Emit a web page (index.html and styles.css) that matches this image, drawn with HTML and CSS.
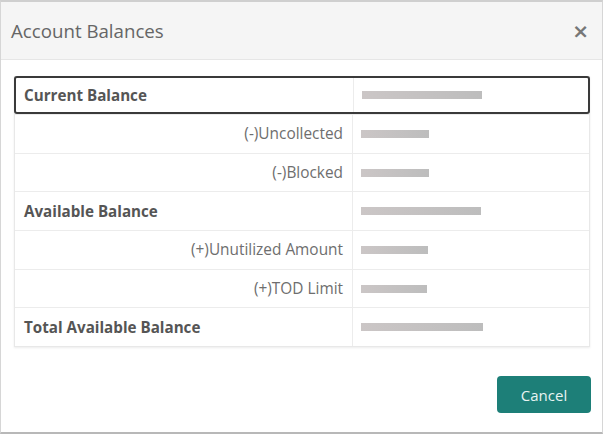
FILE: index.html
```html
<!DOCTYPE html>
<html>
  <head>
    <title>Account Balances</title>
    <link rel="stylesheet" href="styles.css">
  </head>
  <body>
    <div class="modal">
      <div class="modal-header">
        <h2>Account Balances</h2>
        <button class="close">&times;</button>
      </div>
      <div class="modal-body">
        <div class="balances">
          <div class="row current">
            <div class="label strong">Current Balance</div>
            <div class="value"><span class="mask" style="width: 120px"></span></div>
          </div>
          <div class="row">
            <div class="label">(-)Uncollected</div>
            <div class="value"><span class="mask" style="width: 68px"></span></div>
          </div>
          <div class="row">
            <div class="label">(-)Blocked</div>
            <div class="value"><span class="mask" style="width: 68px"></span></div>
          </div>
          <div class="row">
            <div class="label strong">Available Balance</div>
            <div class="value"><span class="mask" style="width: 120px"></span></div>
          </div>
          <div class="row">
            <div class="label">(+)Unutilized Amount</div>
            <div class="value"><span class="mask" style="width: 67px"></span></div>
          </div>
          <div class="row">
            <div class="label">(+)TOD Limit</div>
            <div class="value"><span class="mask" style="width: 66px"></span></div>
          </div>
          <div class="row">
            <div class="label strong">Total Available Balance</div>
            <div class="value"><span class="mask" style="width: 122px"></span></div>
          </div>
        </div>
      </div>
      <div class="modal-footer">
        <button class="btn">Cancel</button>
      </div>
    </div>
  </body>
</html>
```

FILE: styles.css
```css
body {
  margin: 0;
  background-color: white;
  font-family: "Open Sans", sans-serif;
  color: #555;
}

.modal {
  height: 434px;
  box-sizing: border-box;
  border: 1px solid #d6d6d6;
  border-top: 2px solid #cfcfcf;
  border-bottom: 2px solid #b8b8b8;
  display: flex;
  flex-direction: column;
}

.modal-header {
  height: 57px;
  background-color: #f5f5f5;
  border-bottom: 1px solid #e6e6e6;
  display: flex;
  align-items: center;
  justify-content: space-between;
  padding: 0 13px 0 10px;
}

.modal-header h2 {
  margin: 0;
  font-size: 18.7px;
  font-weight: normal;
  color: #666;
}

.close {
  border: none;
  background: none;
  font-family: "DejaVu Sans", sans-serif;
  font-size: 20px;
  font-weight: bold;
  color: #777;
  padding: 0;
  line-height: 1;
}

.modal-body {
  padding: 16px 12px 0 13px;
}

.balances {
  border: 1px solid #e8e8e8;
  box-shadow: 0 1px 2px rgba(0, 0, 0, 0.08);
}

.row {
  display: flex;
  height: 37.7px;
  border-top: 1px solid #ececec;
}

.row:first-child {
  border-top: none;
}

.row.current {
  height: 34px;
  border: 2px solid #3a3a3a;
  border-radius: 3px;
  margin: -1px -1px 0 -1px;
}

.row.current .label {
  padding-left: 8px;
}

.label {
  width: 338px;
  box-sizing: border-box;
  border-right: 1px solid #ececec;
  display: flex;
  align-items: center;
  justify-content: flex-end;
  padding: 0 9px;
  font-size: 15.4px;
  color: #6e6e6e;
}

.label.strong {
  justify-content: flex-start;
  font-weight: bold;
  font-size: 15.2px;
  color: #555;
}

.value {
  flex: 1;
  display: flex;
  align-items: center;
  padding-left: 8px;
}

.mask {
  display: block;
  height: 8px;
  background: linear-gradient(to right, #cbc6c6, #bdbdbd);
  filter: blur(0.6px);
}

.modal-footer {
  margin-top: auto;
  display: flex;
  justify-content: flex-end;
  padding: 0 11px 19px 0;
}

.btn {
  width: 94px;
  height: 37px;
  border: none;
  border-radius: 4px;
  background-color: #1d7f78;
  color: #e8f4f2;
  font-family: "Open Sans", sans-serif;
  font-size: 15px;
}
```
